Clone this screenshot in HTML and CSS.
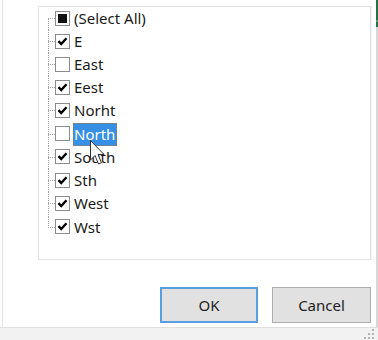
FILE: index.html
```html
<!DOCTYPE html>
<html lang="en">
<head>
	<meta charset="utf-8">
	<title>Filter</title>
	<link rel="stylesheet" href="styles.css">
</head>
<body>
	<div class="window">
		<div class="sheet-edge"></div>
		<div class="dialog">
			<div class="list">
				<ul class="tree">
					<li class="row first"><span class="branch"></span><span class="box mixed"></span><span class="label">(Select All)</span></li>
					<li class="row"><span class="branch"></span><span class="box checked"></span><span class="label">E</span></li>
					<li class="row"><span class="branch"></span><span class="box"></span><span class="label">East</span></li>
					<li class="row"><span class="branch"></span><span class="box checked"></span><span class="label">Eest</span></li>
					<li class="row"><span class="branch"></span><span class="box checked"></span><span class="label">Norht</span></li>
					<li class="row"><span class="branch"></span><span class="box"></span><span class="label selected">North</span></li>
					<li class="row"><span class="branch"></span><span class="box checked"></span><span class="label">South</span></li>
					<li class="row"><span class="branch"></span><span class="box checked"></span><span class="label">Sth</span></li>
					<li class="row"><span class="branch"></span><span class="box checked"></span><span class="label">West</span></li>
					<li class="row last"><span class="branch"></span><span class="box checked"></span><span class="label">Wst</span></li>
				</ul>
			</div>
			<div class="buttons">
				<button class="btn default">OK</button>
				<button class="btn">Cancel</button>
			</div>
		</div>
		<div class="app-edge"></div>
	</div>
	<div class="status">
		<svg class="grip" width="12" height="12" viewBox="0 0 12 12">
			<rect x="9" y="1" width="2" height="2" fill="#b4b4b4"/>
			<rect x="9" y="5" width="2" height="2" fill="#b4b4b4"/>
			<rect x="5" y="5" width="2" height="2" fill="#b4b4b4"/>
			<rect x="9" y="9" width="2" height="2" fill="#b4b4b4"/>
			<rect x="5" y="9" width="2" height="2" fill="#b4b4b4"/>
			<rect x="1" y="9" width="2" height="2" fill="#b4b4b4"/>
		</svg>
	</div>
	<!-- mouse pointer over the list -->
	<svg class="cursor" width="16" height="28" viewBox="0 0 16 28">
		<path d="M0.5,0.5 L0.5,20 L5,15.5 L8.5,24 L11.5,22.8 L8,14.5 L14,14.5 Z" fill="#fff" stroke="#333" stroke-width="1"/>
	</svg>
</body>
</html>
```

FILE: styles.css
```css
body {
	margin: 0;
	width: 378px;
	height: 340px;
	overflow: hidden;
	background: #fff;
	font-family: "Noto Sans", "Liberation Sans", sans-serif;
	font-size: 15px;
	color: #1a1a1a;
}
.window {
	display: flex;
	height: 327px;
}
.sheet-edge {
	width: 2px;
	border-right: 1px solid #e4e4e4;
}
.dialog {
	flex: 1;
	padding: 6px 5px 0 35px;
}
.list {
	height: 252px;
	border: 1px solid #e3e3e3;
	box-shadow: 1px 0 0 #f2f2f2;
}
.tree {
	list-style: none;
	margin: 0;
	padding: 0 0 0 9px;
}
.row {
	display: flex;
	align-items: center;
	height: 23px;
}
.row:nth-child(n+5) {
	margin-top: 0.3px;
}
.branch {
	align-self: stretch;
	width: 7px;
	position: relative;
}
.branch::before {
	content: "";
	position: absolute;
	left: 0;
	top: 0;
	bottom: 0;
	border-left: 1px dotted #a0a0a0;
}
.branch::after {
	content: "";
	position: absolute;
	left: 0;
	right: 0;
	top: 11px;
	border-top: 1px dotted #a0a0a0;
}
.row.first .branch::before {
	top: 11px;
}
.row.last .branch::before {
	bottom: 11px;
}
.box {
	width: 13px;
	height: 13px;
	border: 1px solid #8c8c8c;
	background: #fff no-repeat center;
	margin-top: -1px;
}
.box.checked {
	background-image: url("data:image/svg+xml,%3Csvg xmlns='http://www.w3.org/2000/svg' width='13' height='13'%3E%3Cpath d='M2.5 6.2 L5.2 9 L10.5 3.2' fill='none' stroke='%23000' stroke-width='2.4'/%3E%3C/svg%3E");
}
.box.mixed {
	background-image: linear-gradient(#111, #111);
	background-size: 9px 9px;
}
.label {
	margin-left: 3px;
	padding: 0 1px 0 0;
	border: 1px dotted transparent;
	line-height: 21px;
	white-space: nowrap;
}
.label.selected {
	background: #3690e6;
	border-color: #a8744a;
	color: #fff;
}
.buttons {
	display: flex;
	justify-content: flex-end;
	gap: 14px;
	margin-top: 27px;
}
.btn {
	width: 99px;
	height: 36px;
	border: 1px solid #adadad;
	background: #e1e1e1;
	font-family: inherit;
	font-size: 15px;
	color: #1e1e1e;
	padding: 0;
}
.btn.default {
	width: 98px;
	border: 2px solid #5a9ee2;
}
.app-edge {
	width: 2px;
	background: linear-gradient(#217346 0, #217346 20px, #5e9a78 20px, #5e9a78 22px, #217346 22px, #217346 27px, #d8d8d8 27px);
}
.status {
	height: 12px;
	border-top: 1px solid #dedede;
	background: #f2f2f2;
	display: flex;
	justify-content: flex-end;
	padding-right: 3px;
}
.cursor {
	position: absolute;
	left: 90px;
	top: 140px;
}
```
